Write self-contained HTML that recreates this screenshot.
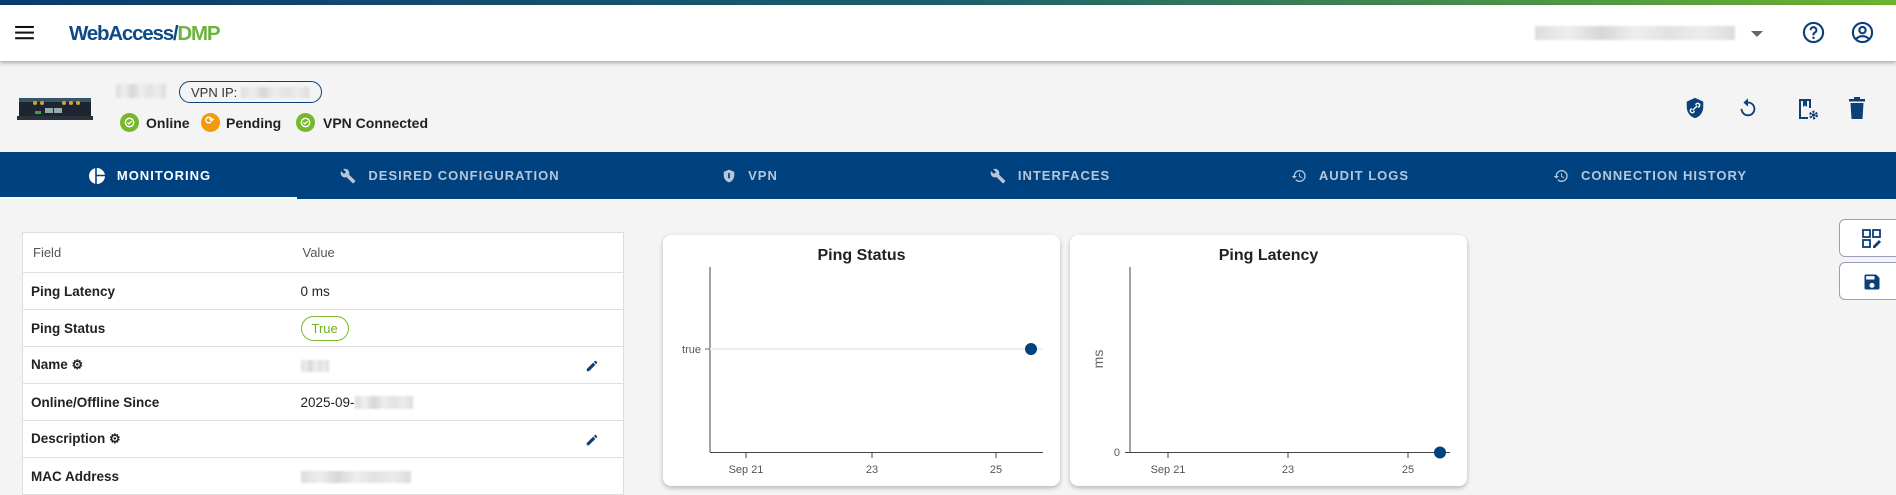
<!DOCTYPE html>
<html><head><meta charset="utf-8">
<style>
*{box-sizing:border-box;margin:0;padding:0}
body{width:1896px;height:490px;overflow:hidden;background:#f4f4f4;font-family:"Liberation Sans",sans-serif;position:relative;color:#222}
.abs{position:absolute}
.topbar{left:0;top:0;width:1896px;height:5px;background:linear-gradient(90deg,#0b3b6e 0%,#1c5f6e 50%,#6cb42f 100%)}
.header{left:0;top:5px;width:1896px;height:56px;background:#fff;box-shadow:0 2px 4px rgba(0,0,0,.3)}
.blur{background:linear-gradient(90deg,#ddd,#eee,#d6d6d6,#eee,#e2e2e2,#ececec,#dcdcdc);filter:blur(1px)}
.status{font-weight:bold;font-size:14px;color:#222;top:115px}
.dot{width:19px;height:19px;border-radius:50%;top:113px}
.tabs{left:0;top:152px;width:1896px;height:47px;background:#00427f}
.tab{position:absolute;top:0;width:300px;height:47px;display:flex;align-items:center;justify-content:center;color:#b9c6d8;font-weight:bold;font-size:13px;letter-spacing:1px}
.tab svg{margin-right:12px}
.tab.active{color:#fff}
table{position:absolute;left:22px;top:232px;width:602px;border-collapse:collapse;background:#fff;border:1px solid #ddd}
td{border-bottom:1px solid #e0e0e0;height:37px;font-size:13.5px;padding-left:8px;position:relative}
tr.h td{height:40px;color:#555;font-size:13px;padding-left:10px}
td.l{font-weight:bold;width:270px}
.card{background:#fff;border-radius:8px;box-shadow:0 2px 5px rgba(0,0,0,.25);top:235px;height:251px;width:397px}
.card h3{position:absolute;top:12px;width:100%;text-align:center;font-size:16px;font-weight:bold;color:#222}
.rbtn{left:1839px;width:70px;height:38px;background:#fff;border:1px solid #9a9cc0;border-radius:6px}
</style></head><body>
<div class="abs topbar"></div>
<div class="abs header">
  <svg class="abs" style="left:15px;top:20px" width="19" height="15" viewBox="0 0 20 16"><rect y="1" width="20" height="2.2" fill="#111"/><rect y="7" width="20" height="2.2" fill="#111"/><rect y="13" width="20" height="2.2" fill="#111"/></svg>
  <div class="abs" style="left:69px;top:17px;font-size:20.5px;font-weight:bold;letter-spacing:-1.2px;color:#0d4a86">WebAccess/<span style="color:#6db33f">DMP</span></div>
  <div class="abs blur" style="left:1535px;top:21px;width:200px;height:14px"></div>
  <svg class="abs" style="left:1751px;top:26px" width="12" height="7"><path d="M0 0h12L6 6z" fill="#666"/></svg>
  <svg class="abs" style="left:1802px;top:16px" width="23" height="23" viewBox="0 0 24 24"><circle cx="12" cy="12" r="10" fill="none" stroke="#0d3f78" stroke-width="2.2"/><path d="M9 9.5a3 3 0 1 1 4 2.8c-.8.4-1 1-1 2v.7" fill="none" stroke="#0d3f78" stroke-width="2.2"/><circle cx="12" cy="17.6" r="1.3" fill="#0d3f78"/></svg>
  <svg class="abs" style="left:1851px;top:16px" width="23" height="23" viewBox="0 0 24 24"><circle cx="12" cy="12" r="10" fill="none" stroke="#0d3f78" stroke-width="2.2"/><circle cx="12" cy="9.5" r="3.3" fill="none" stroke="#0d3f78" stroke-width="2.2"/><path d="M5.5 18.5c3.5-3.5 9.5-3.5 13 0" fill="none" stroke="#0d3f78" stroke-width="2.2"/></svg>
</div>
<svg class="abs" style="left:17px;top:92px" width="76" height="30" viewBox="0 0 76 30"><rect x="2" y="6" width="72" height="20" fill="#1d2630"/><rect x="2" y="6" width="72" height="4" fill="#3b5368"/><rect x="0" y="24" width="76" height="4" fill="#2a323b"/><circle cx="18" cy="11" r="2" fill="#c9a640"/><circle cx="25" cy="11" r="2" fill="#c9a640"/><circle cx="47" cy="11" r="2" fill="#c9a640"/><circle cx="54" cy="11" r="2" fill="#c9a640"/><circle cx="61" cy="11" r="2" fill="#c9a640"/><rect x="28" y="16" width="8" height="5" fill="#9aa"/><rect x="37" y="16" width="8" height="5" fill="#9aa"/><rect x="18" y="19" width="6" height="3" fill="#3a3"/></svg>
<div class="abs blur" style="left:116px;top:84px;width:50px;height:14px"></div>
<div class="abs" style="left:179px;top:81px;width:143px;height:22px;border:1.5px solid #0d3f78;border-radius:11px;font-size:13px;color:#333;padding:3px 0 0 11px">VPN IP: <span class="blur" style="display:inline-block;width:68px;height:11px;vertical-align:-1px"></span></div>
<div class="abs dot" style="left:120px;background:#76b82a"></div>
<svg class="abs" style="left:124px;top:117px" width="11" height="11" viewBox="0 0 12 12"><circle cx="6" cy="6" r="4.6" fill="none" stroke="#fff" stroke-width="1.5"/><path d="M3.8 6l1.6 1.6L8.3 4.6" fill="none" stroke="#fff" stroke-width="1.5"/></svg>
<div class="abs status" style="left:146px">Online</div>
<div class="abs dot" style="left:201px;background:#f39a0b"></div>
<div class="abs" style="left:205px;top:114px;color:#fff;font-size:11px;font-weight:bold">⟳</div>
<div class="abs status" style="left:226px">Pending</div>
<div class="abs dot" style="left:296px;background:#76b82a"></div>
<svg class="abs" style="left:300px;top:117px" width="11" height="11" viewBox="0 0 12 12"><circle cx="6" cy="6" r="4.6" fill="none" stroke="#fff" stroke-width="1.5"/><path d="M3.8 6l1.6 1.6L8.3 4.6" fill="none" stroke="#fff" stroke-width="1.5"/></svg>
<div class="abs status" style="left:323px">VPN Connected</div>
<svg class="abs" style="left:1684px;top:97px" width="22" height="22" viewBox="0 0 24 24"><path d="M12 1l9 4v6c0 5.5-3.8 10.7-9 12-5.2-1.3-9-6.5-9-12V5z" fill="#0d3f78"/><path d="M9.5 14.5l5-5M8.5 12.5l-1 1a2 2 0 0 0 3 3l1-1M15.5 11.5l1-1a2 2 0 0 0-3-3l-1 1" stroke="#fff" stroke-width="1.6" fill="none"/></svg>
<svg class="abs" style="left:1737px;top:97px" width="22" height="22" viewBox="0 0 24 24"><path d="M12 5V1.5L7 6l5 4.5V7a6 6 0 1 1-6 6H4a8 8 0 1 0 8-8z" fill="#0d3f78"/></svg>
<svg class="abs" style="left:1795px;top:97px" width="24" height="24" viewBox="0 0 24 24"><path d="M4 2h12v9h-2V4h-2v6l-2-1.5L8 10V4H6v16h7v2H4z" fill="#0d3f78"/><circle cx="18.5" cy="18" r="3.2" fill="none" stroke="#0d3f78" stroke-width="2.4" stroke-dasharray="2 1.4"/><circle cx="18.5" cy="18" r="1.6" fill="#0d3f78"/></svg>
<svg class="abs" style="left:1847px;top:97px" width="20" height="22" viewBox="0 0 20 22"><rect x="2" y="2" width="16" height="2.5" fill="#0d3f78"/><rect x="7" y="0" width="6" height="2.5" fill="#0d3f78"/><path d="M3.5 6h13l-1 16h-11z" fill="#0d3f78"/></svg>
<div class="abs tabs">
  <div class="tab active" style="left:0"><svg width="16" height="16" viewBox="0 0 16 16"><circle cx="8" cy="8" r="8" fill="#fff"/><path d="M7 0v16M7 7.5h9" stroke="#00427f" stroke-width="1.6"/></svg>MONITORING</div>
  <div class="abs" style="left:0;top:45px;width:297px;height:2px;background:#fff"></div>
  <div class="tab" style="left:300px"><svg width="16" height="16" viewBox="0 0 24 24"><path d="M22.7 19l-9.1-9.1c.9-2.3.4-5-1.5-6.9-2-2-5-2.4-7.4-1.3L9 6 6 9 1.6 4.7C.4 7.1.9 10.1 2.9 12.1c1.9 1.9 4.6 2.4 6.9 1.5l9.1 9.1c.4.4 1 .4 1.4 0l2.3-2.3c.5-.4.5-1.1.1-1.4z" fill="#b9c6d8"/></svg>DESIRED CONFIGURATION</div>
  <div class="tab" style="left:600px"><svg width="14" height="16" viewBox="0 0 24 24"><path d="M12 1l9 4v6c0 5.5-3.8 10.7-9 12-5.2-1.3-9-6.5-9-12V5z" fill="#b9c6d8"/><rect x="10.5" y="7" width="3" height="9" fill="#00427f"/></svg>VPN</div>
  <div class="tab" style="left:900px"><svg width="16" height="16" viewBox="0 0 24 24"><path d="M22.7 19l-9.1-9.1c.9-2.3.4-5-1.5-6.9-2-2-5-2.4-7.4-1.3L9 6 6 9 1.6 4.7C.4 7.1.9 10.1 2.9 12.1c1.9 1.9 4.6 2.4 6.9 1.5l9.1 9.1c.4.4 1 .4 1.4 0l2.3-2.3c.5-.4.5-1.1.1-1.4z" fill="#b9c6d8"/></svg>INTERFACES</div>
  <div class="tab" style="left:1200px"><svg width="16" height="16" viewBox="0 0 24 24"><path d="M13 3a9 9 0 0 0-9 9H1l4 4 4-4H6a7 7 0 1 1 2 4.9l-1.4 1.4A9 9 0 1 0 13 3zm-1 5v5l4.3 2.5.7-1.2-3.5-2.1V8z" fill="#b9c6d8"/></svg>AUDIT LOGS</div>
  <div class="tab" style="left:1500px"><svg width="16" height="16" viewBox="0 0 24 24"><path d="M13 3a9 9 0 0 0-9 9H1l4 4 4-4H6a7 7 0 1 1 2 4.9l-1.4 1.4A9 9 0 1 0 13 3zm-1 5v5l4.3 2.5.7-1.2-3.5-2.1V8z" fill="#b9c6d8"/></svg>CONNECTION HISTORY</div>
</div>
<table>
<tr class="h"><td>Field</td><td>Value</td></tr>
<tr><td class="l">Ping Latency</td><td>0 ms</td></tr>
<tr><td class="l">Ping Status</td><td><span style="display:inline-block;border:1.5px solid #7ab929;color:#6fae22;border-radius:13px;padding:4px 10px;font-size:13px">True</span></td></tr>
<tr><td class="l">Name <span style="font-size:13px">⚙</span></td><td><span class="blur" style="display:inline-block;width:28px;height:12px;vertical-align:middle"></span><svg style="position:absolute;left:292px;top:12px" width="14" height="14" viewBox="0 0 24 24"><path d="M3 17.2V21h3.8l11-11-3.8-3.8zM20.7 7a1 1 0 0 0 0-1.4l-2.3-2.3a1 1 0 0 0-1.4 0l-1.8 1.8 3.8 3.8z" fill="#0d3f78"/></svg></td></tr>
<tr><td class="l">Online/Offline Since</td><td>2025-09-<span class="blur" style="display:inline-block;width:58px;height:13px;vertical-align:middle"></span></td></tr>
<tr><td class="l">Description <span style="font-size:13px">⚙</span></td><td><svg style="position:absolute;left:292px;top:12px" width="14" height="14" viewBox="0 0 24 24"><path d="M3 17.2V21h3.8l11-11-3.8-3.8zM20.7 7a1 1 0 0 0 0-1.4l-2.3-2.3a1 1 0 0 0-1.4 0l-1.8 1.8 3.8 3.8z" fill="#0d3f78"/></svg></td></tr>
<tr><td class="l">MAC Address</td><td><span class="blur" style="display:inline-block;width:110px;height:12px;vertical-align:middle"></span></td></tr>
</table>
<div class="abs card" style="left:663px"><h3>Ping Status</h3>
<svg class="abs" style="left:0;top:0" width="397" height="251">
<line x1="47" y1="32" x2="47" y2="217" stroke="#444"/><line x1="47" y1="217.5" x2="380" y2="217.5" stroke="#444"/>
<line x1="47" y1="114" x2="380" y2="114" stroke="#eee" stroke-width="2"/><line x1="42" y1="114" x2="47" y2="114" stroke="#666"/>
<text x="38" y="118" font-size="11" fill="#555" text-anchor="end" font-family="Liberation Sans">true</text>
<g stroke="#444"><line x1="83" y1="217" x2="83" y2="223"/><line x1="209" y1="217" x2="209" y2="223"/><line x1="333" y1="217" x2="333" y2="223"/></g>
<g font-size="11" fill="#555" text-anchor="middle" font-family="Liberation Sans"><text x="83" y="238">Sep 21</text><text x="209" y="238">23</text><text x="333" y="238">25</text></g>
<circle cx="368" cy="114" r="6" fill="#00427f"/></svg></div>
<div class="abs card" style="left:1070px"><h3>Ping Latency</h3>
<svg class="abs" style="left:0;top:0" width="397" height="251">
<line x1="60" y1="32" x2="60" y2="217" stroke="#444"/><line x1="60" y1="217.5" x2="380" y2="217.5" stroke="#444"/><line x1="55" y1="217.5" x2="60" y2="217.5" stroke="#444"/>
<text x="50" y="221" font-size="11" fill="#555" text-anchor="end" font-family="Liberation Sans">0</text>
<text transform="translate(33,124) rotate(-90)" font-size="14" fill="#666" text-anchor="middle" font-family="Liberation Sans">ms</text>
<g stroke="#444"><line x1="98" y1="217" x2="98" y2="223"/><line x1="218" y1="217" x2="218" y2="223"/><line x1="338" y1="217" x2="338" y2="223"/></g>
<g font-size="11" fill="#555" text-anchor="middle" font-family="Liberation Sans"><text x="98" y="238">Sep 21</text><text x="218" y="238">23</text><text x="338" y="238">25</text></g>
<circle cx="370" cy="217.5" r="6" fill="#00427f"/></svg></div>
<div class="abs rbtn" style="top:219px"><svg class="abs" style="left:22px;top:9px" width="20" height="20" viewBox="0 0 20 20"><rect x="1" y="1" width="7" height="7" fill="none" stroke="#0d3f78" stroke-width="1.8"/><rect x="11" y="1" width="7" height="7" fill="none" stroke="#0d3f78" stroke-width="1.8"/><rect x="1" y="11" width="7" height="7" fill="none" stroke="#0d3f78" stroke-width="1.8"/><path d="M11 19v-2l6-6 2 2-6 6z" fill="#0d3f78"/></svg></div>
<div class="abs rbtn" style="top:262px"><svg class="abs" style="left:22px;top:9px" width="20" height="20" viewBox="0 0 24 24"><path d="M17 3H5a2 2 0 0 0-2 2v14a2 2 0 0 0 2 2h14a2 2 0 0 0 2-2V7zM12 19a3 3 0 1 1 0-6 3 3 0 0 1 0 6zm3-10H5V5h10z" fill="#0d3f78"/></svg></div>
</body></html>
